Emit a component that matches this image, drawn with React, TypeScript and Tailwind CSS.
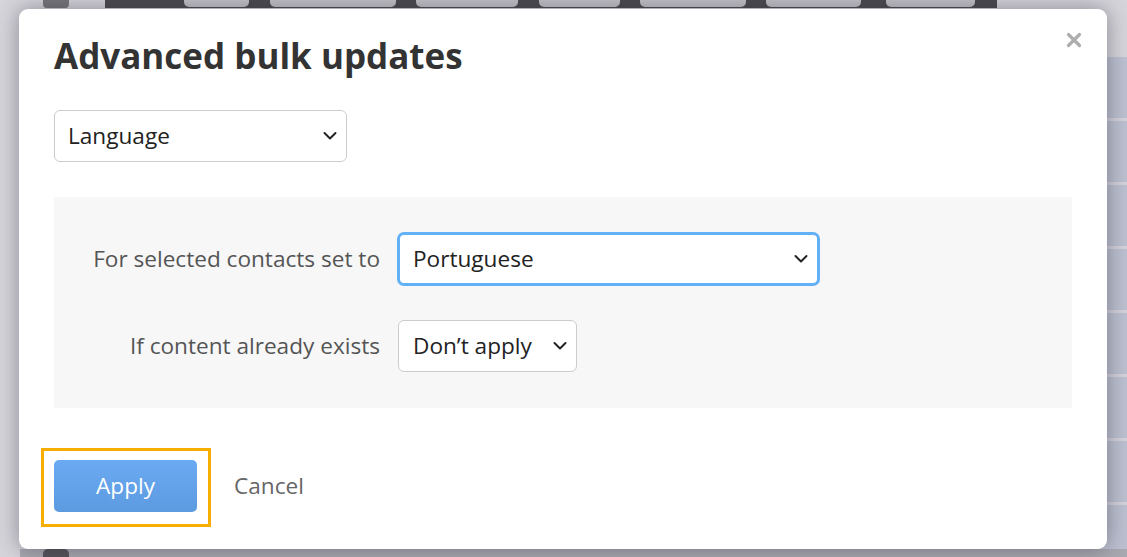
import React from "react";

const font = { fontFamily: '"Open Sans", "Noto Sans", sans-serif' };

function Chevron({ className = "" }: { className?: string }) {
  return (
    <svg width="16" height="10" viewBox="0 0 16 10" className={className}>
      <polyline points="2.5,2 8,7.5 13.5,2" fill="none" stroke="#222" strokeWidth="2" strokeLinecap="round" strokeLinejoin="round" />
    </svg>
  );
}

export default function App() {
  const tabs = [
    [184, 65],
    [270, 126],
    [416, 102],
    [539, 81],
    [640, 106],
    [766, 95],
    [886, 89],
  ];
  return (
    <div className="relative w-[1127px] h-[557px] overflow-hidden bg-[#d7d5dc]" style={font}>
      {/* background page */}
      <div className="flex h-full">
        <div className="w-[105px] shrink-0 flex flex-col">
          <div className="pl-[43px]">
            <div className="w-[26px] h-[8px] rounded-b-[4px] bg-[#77767c]" />
          </div>
        </div>
        <div className="flex-1 flex flex-col min-h-0">
          <div className="flex h-[57px] shrink-0">
            <div className="w-[892px] h-[8px] bg-[#4b4a50] flex">
              {tabs.map(([x, w], i) => (
                <div key={i} className="h-[7px] rounded-b-[5px] bg-[#c4c2c9] shrink-0" style={{ width: w, marginLeft: i === 0 ? x - 105 : x - (tabs[i - 1][0] + tabs[i - 1][1]) }} />
              ))}
            </div>
          </div>
          <div className="flex-1 min-h-0 overflow-hidden flex flex-col bg-[#bcc0d0]">
            {Array.from({ length: 8 }).map((_, i) => (
              <div key={i} className="h-[64px] shrink-0 border-b-[3px] border-[#d4d3dc]" />
            ))}
          </div>
        </div>
      </div>
      <div className="absolute left-[20px] top-[549px] w-[1107px] h-[8px] bg-[#a9a9b2] flex">
        <div className="ml-[23px] w-[26px] h-[8px] rounded-t-[5px] bg-[#55545a]" />
      </div>

      {/* modal */}
      <div className="absolute left-[19px] top-[9px] w-[1088px] h-[540px] bg-white rounded-[9px] shadow-[0_0_22px_rgba(40,40,50,0.45)] pl-[35px] pr-[35px] pt-[26px]">
        <button className="absolute right-[25px] top-[23px] w-[16px] h-[16px] flex items-center justify-center">
          <svg width="16" height="16" viewBox="0 0 16 16">
            <path d="M2.5 2.5 L13.5 13.5 M13.5 2.5 L2.5 13.5" stroke="#adadad" strokeWidth="3.2" strokeLinecap="round" />
          </svg>
        </button>
        <h1 className="text-[35px] leading-[42px] font-bold text-[#333333]">Advanced bulk updates</h1>

        <div className="mt-[33px] w-[293px] h-[52px] border border-[#cccccc] rounded-[6px] flex items-center justify-between pl-[13px] pr-[8px]">
          <span className="text-[22.6px] text-[#222]">Language</span>
          <Chevron />
        </div>

        <div className="mt-[35px] w-[1018px] bg-[#f7f7f7] pt-[35px] pb-[36px] grid grid-cols-[326px_auto] gap-x-[17px] gap-y-[34px] items-center">
          <div className="text-right text-[22.6px] text-[#555555] whitespace-nowrap">For selected contacts set to</div>
          <div className="w-[423px] h-[54px] border-[3px] border-[#62b0f5] rounded-[7px] bg-white flex items-center justify-between pl-[13px] pr-[8px]">
            <span className="text-[22.6px] text-[#222]">Portuguese</span>
            <Chevron />
          </div>
          <div className="text-right text-[22.6px] text-[#555555] whitespace-nowrap">If content already exists</div>
          <div className="ml-[1px] w-[179px] h-[52px] border border-[#cccccc] rounded-[6px] bg-white flex items-center justify-between pl-[14px] pr-[8px]">
            <span className="text-[22.6px] text-[#222]">Don’t apply</span>
            <Chevron />
          </div>
        </div>

        <div className="mt-[40px] -ml-[13px] flex items-center">
          <div className="w-[170px] h-[79px] border-[3px] border-[#f8ae00] pl-[10px] pt-[9px]">
            <button className="w-[143px] h-[52px] rounded-[5px] bg-gradient-to-b from-[#6baaf2] to-[#5c9be0] text-white text-[22.6px]">Apply</button>
          </div>
          <span className="ml-[23px] -mt-[3px] text-[22.6px] text-[#666666]">Cancel</span>
        </div>
      </div>
    </div>
  );
}
